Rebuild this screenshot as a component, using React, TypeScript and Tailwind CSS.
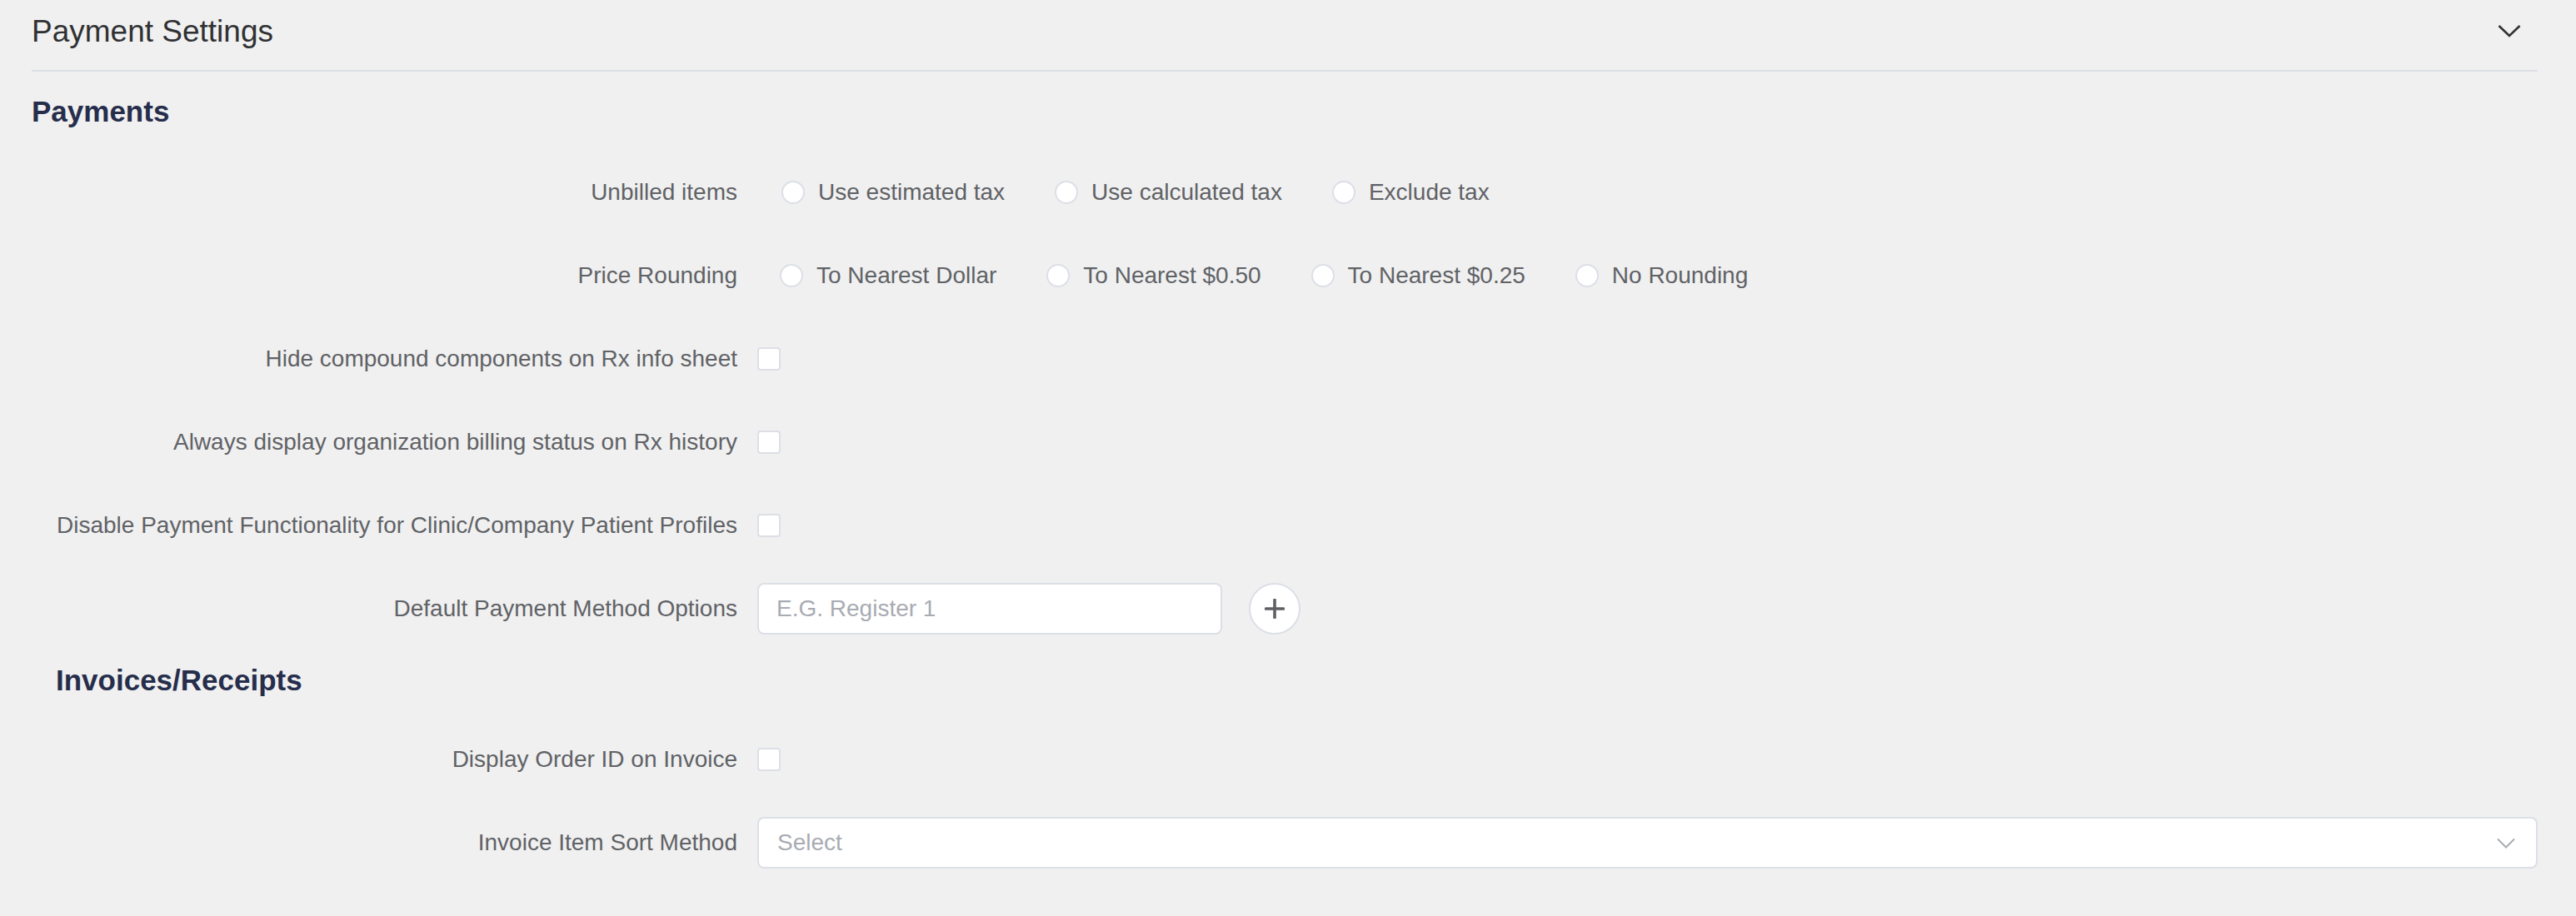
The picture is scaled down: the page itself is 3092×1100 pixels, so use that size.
import React from "react";

const Radio = ({ label, last }: { label: string; last?: boolean }) => (
  <div className={last ? "flex items-center" : "mr-[60px] flex items-center"}>
    <span className="h-[28px] w-[28px] shrink-0 rounded-full border-2 border-[#dcdfe6] bg-white" />
    <span className="ml-[16px] text-[28px] leading-none text-[#606266]">{label}</span>
  </div>
);

const Checkbox = () => (
  <span className="block h-[28px] w-[28px] rounded-[4px] border-2 border-[#dcdfe6] bg-white" />
);

const Row = ({ label, children }: { label: string; children: React.ReactNode }) => (
  <div className="flex h-[62px] items-center">
    <div className="w-[847px] shrink-0 text-right text-[28px] leading-none text-[#606266]">{label}</div>
    <div className="ml-[24px] flex flex-1 items-center">{children}</div>
  </div>
);

export default function App() {
  return (
    <div className="min-h-[1100px] bg-[#f0f0f0] pl-[38px] pr-[46px] font-['Liberation_Sans',Arial,sans-serif]">
      <div className="flex h-[74px] items-center justify-between">
        <div className="text-[37px] leading-none text-[#303133]">Payment Settings</div>
        <svg width="28" height="16" viewBox="0 0 28 16" className="mr-[20px]">
          <polyline points="1.5,2 14,14 26.5,2" fill="none" stroke="#303133" strokeWidth="2.6" />
        </svg>
      </div>
      <div className="mt-[10px] h-[2px] bg-[#dcdfe6]" />

      <div className="mt-[28px] text-[35px] font-bold leading-[40px] text-[#262e4c]">Payments</div>

      <div className="mt-[46px] flex flex-col gap-[38px]">
        <Row label="Unbilled items">
          <div className="ml-[29px] flex items-center">
            <Radio label="Use estimated tax" />
            <Radio label="Use calculated tax" />
            <Radio label="Exclude tax" last />
          </div>
        </Row>
        <Row label="Price Rounding">
          <div className="ml-[27px] flex items-center">
            <Radio label="To Nearest Dollar" />
            <Radio label="To Nearest $0.50" />
            <Radio label="To Nearest $0.25" />
            <Radio label="No Rounding" last />
          </div>
        </Row>
        <Row label="Hide compound components on Rx info sheet">
          <Checkbox />
        </Row>
        <Row label="Always display organization billing status on Rx history">
          <Checkbox />
        </Row>
        <Row label="Disable Payment Functionality for Clinic/Company Patient Profiles">
          <Checkbox />
        </Row>
        <Row label="Default Payment Method Options">
          <input
            readOnly
            placeholder="E.G. Register 1"
            className="h-[62px] w-[558px] rounded-[8px] border-2 border-[#dcdfe6] bg-white px-[21px] text-[28px] text-[#606266] outline-none placeholder:text-[#a8abb2]"
          />
          <button className="ml-[32px] flex h-[62px] w-[62px] items-center justify-center rounded-full border-2 border-[#dcdfe6] bg-white">
            <svg width="24" height="24" viewBox="0 0 24 24">
              <line x1="12" y1="1.5" x2="12" y2="22.5" stroke="#5f6064" strokeWidth="3.6" strokeLinecap="round" />
              <line x1="1.5" y1="12" x2="22.5" y2="12" stroke="#5f6064" strokeWidth="3.6" strokeLinecap="round" />
            </svg>
          </button>
        </Row>
      </div>

      <div className="ml-[29px] mt-[35px] text-[35px] font-bold leading-[40px] text-[#262e4c]">Invoices/Receipts</div>

      <div className="mt-[44px] flex flex-col gap-[38px]">
        <Row label="Display Order ID on Invoice">
          <Checkbox />
        </Row>
        <Row label="Invoice Item Sort Method">
          <div className="flex h-[62px] flex-1 items-center justify-between rounded-[8px] border-2 border-[#dcdfe6] bg-white pl-[22px] pr-[25px]">
            <span className="text-[28px] leading-none text-[#a8abb2]">Select</span>
            <svg width="22" height="13" viewBox="0 0 22 13">
              <polyline points="1,1.5 11,11.5 21,1.5" fill="none" stroke="#a8abb2" strokeWidth="2" />
            </svg>
          </div>
        </Row>
      </div>
    </div>
  );
}
